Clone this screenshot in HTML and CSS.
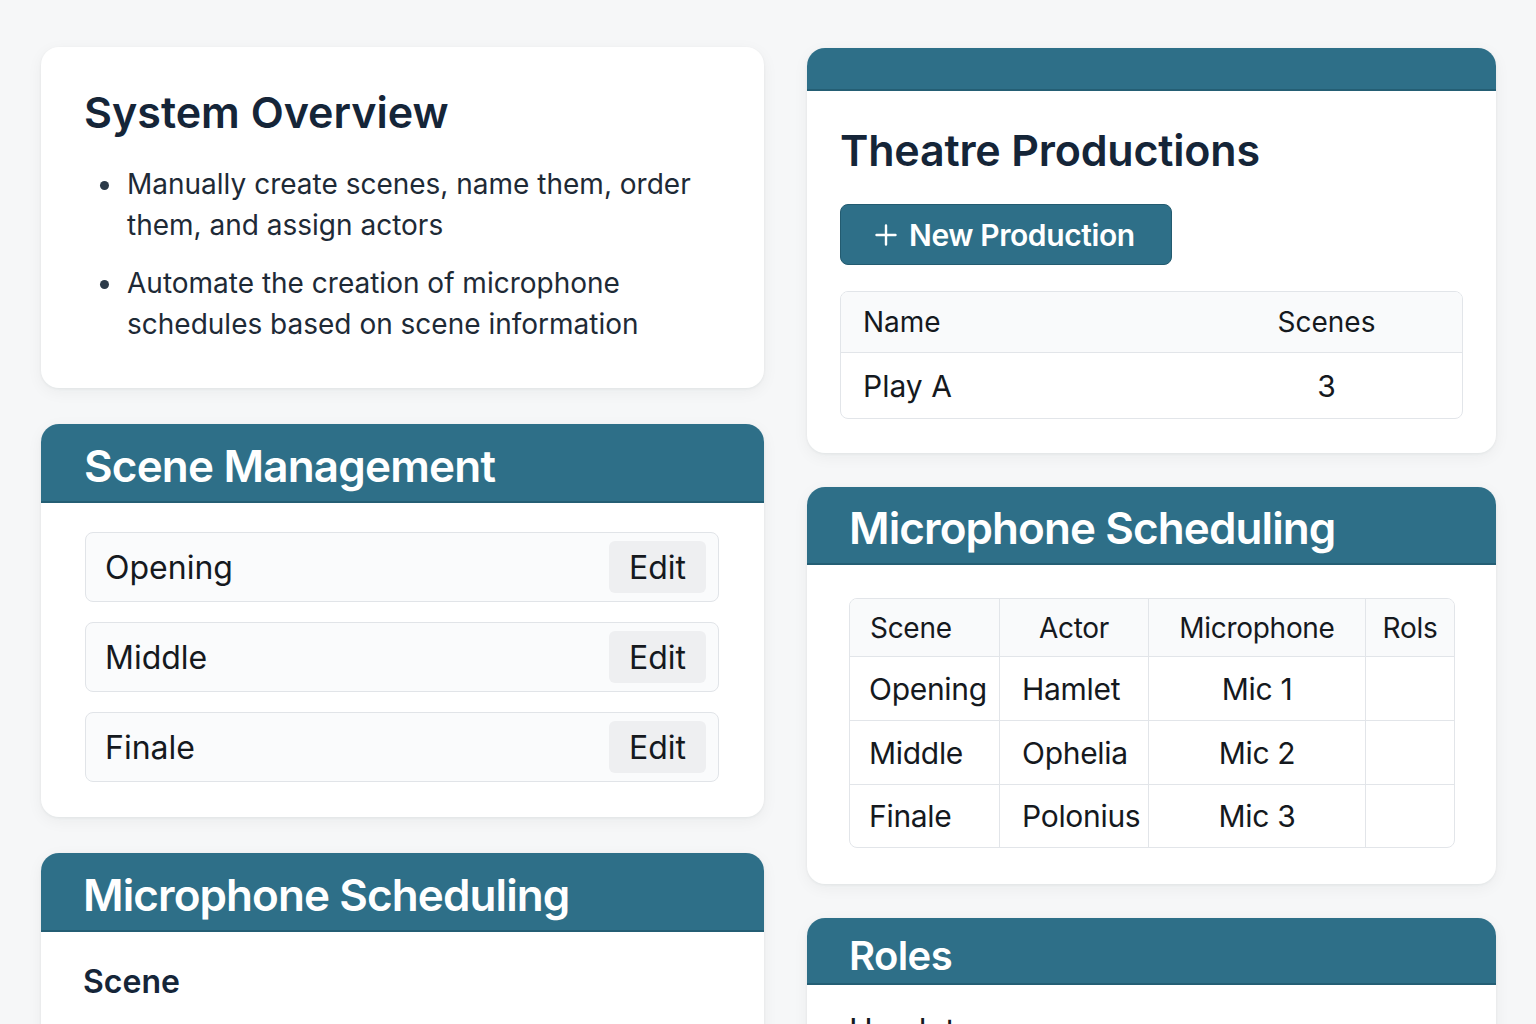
FILE: index.html
```html
<!DOCTYPE html>
<html lang="en">
<head>
<meta charset="utf-8">
<title>Theatre Microphone Scheduler</title>
<link rel="stylesheet" href="styles.css">
</head>
<body>
<div class="page">
  <div class="col col-left">
    <section class="card overview">
      <h1 class="card-title">System Overview</h1>
      <ul class="bullets">
        <li>Manually create scenes, name them, order them, and assign actors</li>
        <li>Automate the creation of microphone schedules based on scene information</li>
      </ul>
    </section>

    <section class="card scenes">
      <header class="card-head head-scenes"><h2>Scene Management</h2></header>
      <div class="scene-list">
        <div class="scene-row"><span>Opening</span><button class="edit-btn">Edit</button></div>
        <div class="scene-row"><span>Middle</span><button class="edit-btn">Edit</button></div>
        <div class="scene-row"><span>Finale</span><button class="edit-btn">Edit</button></div>
      </div>
    </section>

    <section class="card mic-left">
      <header class="card-head head-mic-left"><h2>Microphone Scheduling</h2></header>
      <div class="mic-left-body">
        <div class="field-label">Scene</div>
        <div class="field-box">Opening</div>
        <div class="field-label">Actor</div>
        <div class="field-box">Hamlet</div>
      </div>
    </section>
  </div>

  <div class="col col-right">
    <section class="card productions">
      <div class="card-strip"></div>
      <div class="productions-body">
        <h1 class="card-title">Theatre Productions</h1>
        <button class="primary-btn">
          <svg class="plus" viewBox="0 0 22 22" width="22" height="22" aria-hidden="true"><path d="M11 1.5v19M1.5 11h19" stroke="#fff" stroke-width="2.4" stroke-linecap="round" fill="none"/></svg>
          <span>New Production</span>
        </button>
        <table class="prod-table">
          <thead><tr><th class="c-name">Name</th><th class="c-scenes">Scenes</th></tr></thead>
          <tbody><tr><td class="c-name">Play A</td><td class="c-scenes">3</td></tr></tbody>
        </table>
      </div>
    </section>

    <section class="card mic-right">
      <header class="card-head head-mic-right"><h2>Microphone Scheduling</h2></header>
      <div class="mic-right-body">
        <table class="mic-table">
          <colgroup><col class="w1"><col class="w2"><col class="w3"><col class="w4"></colgroup>
          <thead>
            <tr><th class="left">Scene</th><th>Actor</th><th>Microphone</th><th>Rols</th></tr>
          </thead>
          <tbody>
            <tr><td class="left">Opening</td><td class="actor">Hamlet</td><td>Mic 1</td><td></td></tr>
            <tr><td class="left">Middle</td><td class="actor">Ophelia</td><td>Mic 2</td><td></td></tr>
            <tr><td class="left">Finale</td><td class="actor">Polonius</td><td>Mic 3</td><td></td></tr>
          </tbody>
        </table>
      </div>
    </section>

    <section class="card roles">
      <header class="card-head head-roles"><h2>Roles</h2></header>
      <ul class="role-list">
        <li>Hamlet</li>
        <li>Ophelia</li>
        <li>Polonius</li>
      </ul>
    </section>
  </div>
</div>
</body>
</html>
```

FILE: styles.css
```css
* { box-sizing: border-box; }
html, body { margin: 0; padding: 0; }
body {
  background: #f6f7f8;
  font-family: Inter, "Noto Sans", "Liberation Sans", sans-serif;
  color: #1b2128;
  height: 1024px;
  overflow: hidden;
}
.page {
  display: flex;
  align-items: flex-start;
  gap: 43px;
  padding: 47px 40px 0 41px;
}
.col { display: flex; flex-direction: column; gap: 36px; }
.col-left { width: 723px; }
.col-right { width: 689px; gap: 34px; margin-top: 1px; }

.card {
  background: #fff;
  border-radius: 18px;
  box-shadow: 0 1px 3px rgba(20, 30, 40, 0.06), 0 4px 16px rgba(20, 30, 40, 0.05);
  overflow: hidden;
}
.card-title {
  margin: 0;
  font-size: 43px;
  line-height: 50px;
  font-weight: 600;
  color: #152538;
  letter-spacing: 0;
}

/* Overview */
.overview { padding: 40px 44px 43px 43px; }
.bullets {
  list-style: none;
  margin: 27px 0 0 0;
  padding: 0 0 0 43px;
  font-size: 28px;
  line-height: 41px;
  color: #1e2a36;
}
.bullets li { position: relative; }
.bullets li::before {
  content: "";
  position: absolute;
  left: -27px;
  top: 17px;
  width: 9px;
  height: 9px;
  border-radius: 50%;
  background: #2b3a48;
}
.bullets li + li { margin-top: 17px; }

/* Teal headers */
.card-head {
  background: #2e6f88;
  border-bottom: 2px solid #245e74;
  display: flex;
  align-items: center;
}
.card-head h2 {
  margin: 0;
  color: #fff;
  font-weight: 600;
}
.head-scenes { height: 79px; padding: 6px 43px 0; }
.head-scenes h2 { font-size: 44px; line-height: 52px; letter-spacing: -0.8px; }
.head-mic-left { height: 79px; padding: 6px 42px 0; }
.head-mic-left h2 { font-size: 44px; line-height: 54px; letter-spacing: -0.9px; }
.head-mic-right { height: 78px; padding: 6px 42px 0; }
.head-mic-right h2 { font-size: 44px; line-height: 54px; letter-spacing: -0.9px; }
.head-roles { height: 67px; padding: 10px 42px 0; }
.head-roles h2 { font-size: 40px; line-height: 48px; letter-spacing: -0.6px; }

/* Scenes */
.scene-list {
  padding: 29px 45px 35px 44px;
  display: flex;
  flex-direction: column;
  gap: 20px;
}
.scene-row {
  display: flex;
  align-items: center;
  justify-content: space-between;
  height: 70px;
  padding: 0 12px 0 19px;
  background: #fafbfc;
  border: 1px solid #e1e4e8;
  border-radius: 8px;
  font-size: 32px;
  color: #15191e;
}
.edit-btn {
  width: 97px;
  height: 52px;
  border: none;
  border-radius: 6px;
  background: #eeeff1;
  font-family: inherit;
  font-size: 32px;
  color: #15191e;
  padding: 0;
}

/* Left mic card */
.mic-left-body { padding: 30px 42px 40px; }
.field-label {
  font-size: 32px;
  line-height: 40px;
  font-weight: 600;
  color: #152538;
}
.field-box {
  margin: 40px 0 24px;
  height: 64px;
  border: 1px solid #e1e4e8;
  border-radius: 8px;
  padding: 0 20px;
  display: flex;
  align-items: center;
  font-size: 30px;
}

/* Productions */
.card-strip {
  height: 43px;
  background: #2e6f88;
  border-bottom: 2px solid #245e74;
}
.productions-body { padding: 34px 33px 34px 33px; }
.productions .card-title { letter-spacing: -0.2px; }
.primary-btn {
  margin-top: 29px;
  width: 332px;
  height: 61px;
  display: flex;
  align-items: center;
  gap: 12px;
  padding: 0 0 0 34px;
  background: #2e6f88;
  border: 1px solid #235b70;
  border-radius: 8px;
  color: #fff;
  font-family: inherit;
  font-size: 30px;
  font-weight: 600;
  letter-spacing: -0.4px;
}
.plus { flex: none; }
.prod-table {
  margin-top: 26px;
  width: 100%;
  border-collapse: separate;
  border-spacing: 0;
  border: 1px solid #e2e5e9;
  border-radius: 8px;
  overflow: hidden;
}
.prod-table th, .prod-table td { text-align: left; padding: 0 0 0 22px; font-weight: 400; color: #15191e; }
.prod-table th {
  height: 61px;
  background: #f9fafb;
  border-bottom: 1px solid #e2e5e9;
  font-size: 28px;
}
.prod-table td { height: 65px; font-size: 30px; }
.prod-table .c-name { width: 350px; }
.prod-table .c-scenes { text-align: center; padding: 0; }

/* Right mic card */
.mic-right-body { padding: 33px 41px 36px 42px; }
.mic-table {
  width: 100%;
  table-layout: fixed;
  border-collapse: separate;
  border-spacing: 0;
  border: 1px solid #e2e5e9;
  border-radius: 8px;
  overflow: hidden;
  color: #15191e;
}
.mic-table .w1 { width: 150px; }
.mic-table .w2 { width: 149px; }
.mic-table .w3 { width: 217px; }
.mic-table .w4 { width: auto; }
.mic-table th, .mic-table td {
  text-align: center;
  padding: 0;
  border-right: 1px solid #e2e5e9;
  border-bottom: 1px solid #e2e5e9;
  white-space: nowrap;
  letter-spacing: -0.3px;
}
.mic-table th:last-child, .mic-table td:last-child { border-right: none; }
.mic-table tbody tr:last-child td { border-bottom: none; }
.mic-table th {
  height: 58px;
  background: #f9fafb;
  font-size: 28px;
  font-weight: 400;
}
.mic-table td { height: 64px; font-size: 30px; }
.mic-table tbody tr:last-child td { height: 62px; }
.mic-table th.left { text-align: left; padding-left: 20px; }
.mic-table td.left { text-align: left; padding-left: 19px; }
.mic-table td.actor { text-align: left; padding-left: 22px; }

/* Roles */
.role-list {
  list-style: none;
  margin: 0;
  padding: 22px 42px 30px;
  font-size: 32px;
  line-height: 48px;
  color: #15191e;
}
```
